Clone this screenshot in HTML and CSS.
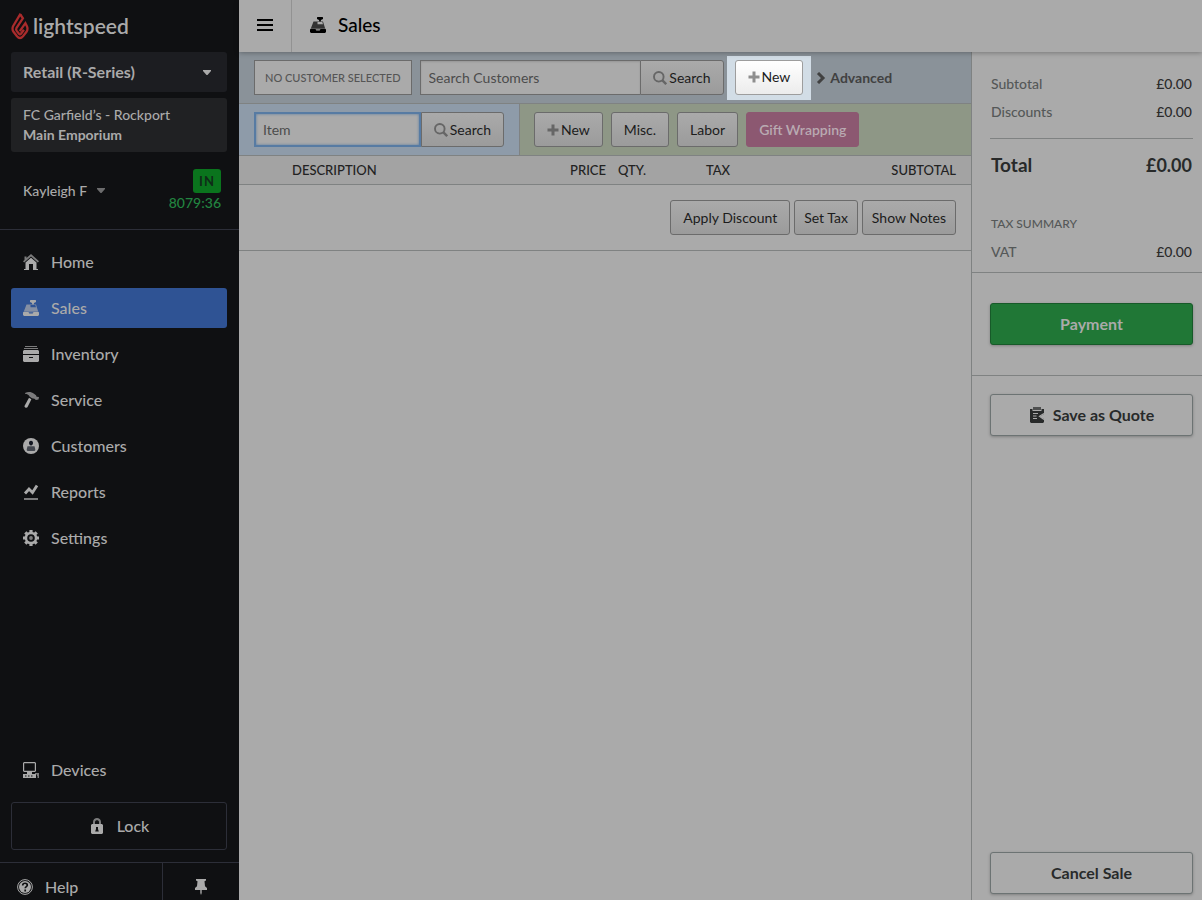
FILE: index.html
```html
<!DOCTYPE html>
<html lang="en">
<head>
<meta charset="utf-8">
<title>Sales</title>
<meta name="viewport" content="width=device-width, initial-scale=1">
<link rel="stylesheet" href="styles.css">
</head>
<body>
<svg class="sprite" aria-hidden="true">
  <symbol id="register" viewBox="0 0 16 16">
    <path d="M7.500 0h5l.5.500v1.500l-2 1-.3 1.500H9.300L9 3 7 2V.500z"/>
    <path class="soft" fill-rule="evenodd" d="M3.500 4.500H13L15 11H1zM7.500 5v2.200H13L12.300 5z"/>
    <path fill-rule="evenodd" d="M1 11.500h14l1 1v2.500l-1 1H1l-1-1v-2.500zM5.500 12.200l.8 1.200h3.400l.8-1.200z"/>
  </symbol>
  <symbol id="search" viewBox="0 0 14 14">
    <circle cx="5.800" cy="5.800" r="4.800" fill="none" stroke="currentColor" stroke-width="1.900"/>
    <path d="M9.200 9.200l4 4" stroke="currentColor" stroke-width="2.400"/>
  </symbol>
  <symbol id="plus" viewBox="0 0 12 12"><path d="M4.500.500h3v4h4v3h-4v4h-3v-4h-4v-3h4z"/></symbol>
</svg>
<div class="app">
  <aside class="sidebar">
    <a class="logo" href="#">
      <svg class="flame" viewBox="0 0 18 27" aria-hidden="true">
        <g fill="none" stroke="#a92b2c" stroke-width="2.300">
          <path d="M9.600.600L2.200 13Q.700 16 2.500 18.800L6 23.200Q9 26.800 12 23.200L15.500 18.800Q17.300 16 15.800 13L14.400 10.200 8.800 18.200"/>
          <path d="M9.300 1.500l2.600 3.800L5.400 15.200Q4.700 16.500 5.700 17.900L8 20.800Q9 21.900 10 20.800L12.900 16.800"/>
        </g>
      </svg>
      <span>lightspeed</span>
    </a>
    <button class="product" type="button">Retail (R-Series)
      <svg class="caret" viewBox="0 0 8 5" aria-hidden="true"><path d="M0 0h8v1L4.500 5h-1L0 1z"/></svg>
    </button>
    <div class="location"><span>FC Garfield’s - Rockport</span><strong>Main Emporium</strong></div>
    <div class="user">
      <button class="user-name" type="button">Kayleigh F
        <svg class="caret" viewBox="0 0 8 5" aria-hidden="true"><path d="M0 0h8v1L4.500 5h-1L0 1z"/></svg>
      </button>
      <div class="clock"><span class="badge">IN</span><span>8079:36</span></div>
    </div>
    <nav class="nav">
      <a href="#"><svg viewBox="0 0 16 16"><path class="soft" d="M8 0l8 7.300-1.200 1.200L8 2.600 1.200 8.500 0 7.300 1.500 6V2.500h2v1.600z"/><path d="M8 3.800l5.500 4.800V15H15v1h-5v-6H6v6H1v-1h1.500V8.600z"/></svg>Home</a>
      <a class="active" href="#" aria-current="page"><svg><use href="#register"/></svg>Sales</a>
      <a href="#"><svg viewBox="0 0 16 16"><path class="soft" d="M2 0h12v1H2zM1 2h14v1H1z"/><path fill-rule="evenodd" d="M1 4h14l1 1v3H0V5zM0 9h16v6l-1 1H1l-1-1zM6 11v1h4v-1z"/></svg>Inventory</a>
      <a href="#"><svg viewBox="0 0 16 16"><path class="soft" d="M2 1c3-1.500 6.500-1.200 9 .7l2 1.500.6 1.500 2.400.3-.5 2.500-2.600.5-1.500-1.300-2.400-.5-2.500-1.600C6 3 4.500 1.800 2 1.700z"/><path d="M6 5.800l2.400 1.400L4.600 15c-.9 1.500-3.600.500-3-1.300z"/></svg>Service</a>
      <a href="#"><svg viewBox="0 0 16 16"><circle cx="8" cy="8" r="8"/><path class="ink" d="M8 2.800c3 0 2.300 4.800 0 4.800S5 2.800 8 2.800z"/><path class="ink-soft" d="M4.500 8.200h7l.8 3.300c0 1.200-.8 1.500-1.600 1.500H5.300c-.8 0-1.600-.3-1.600-1.500z"/></svg>Customers</a>
      <a href="#"><svg viewBox="0 0 16 16"><path d="M2 9.500L6 5l3.500 3.500L14 1.500" fill="none" stroke="currentColor" stroke-width="2.800"/><path class="soft" d="M1 14h14v2H1z"/></svg>Reports</a>
      <a href="#"><svg viewBox="0 0 16 16"><path d="M8 0v16M0 8h16M2.300 2.300l11.400 11.400M13.700 2.300L2.300 13.700" stroke="currentColor" stroke-width="3.200"/><circle cx="8" cy="8" r="6.300"/><circle class="hole" cx="8" cy="8" r="3.800"/><circle class="soft" cx="8" cy="8" r="1.900"/></svg>Settings</a>
    </nav>
    <nav class="nav devices">
      <a href="#"><svg viewBox="0 0 16 16"><path fill-rule="evenodd" d="M1 0h11l1 1v8l-1 1H9v2h4v4H0v-4h4v-2H1L0 9V1zM1.200 1.200v7.600h10.600V1.200zM2 13.500v1h1.500v-1zm3 0v1h1.500v-1zm3 0v1h1.500v-1z"/><path class="soft" d="M12 11h4v5h-1.500v-2H14v-1.500h-2z"/></svg>Devices</a>
    </nav>
    <button class="lock" type="button"><svg viewBox="0 0 16 16"><path class="soft" d="M4 7V4c0-5.300 8-5.300 8 0v3h-2V4c0-2.500-4-2.500-4 0v3z"/><path fill-rule="evenodd" d="M3 6h10l1 1v8l-1 1H3l-1-1V7zM7 9v2l-.8 2.500h3.600L9 11V9z"/></svg>Lock</button>
    <div class="foot">
      <a class="help" href="#"><svg viewBox="0 0 16 16"><circle cx="8" cy="8" r="7.400" fill="none" stroke="currentColor"/><circle cx="8" cy="8" r="6"/><path d="M5.700 6.500c0-3 4.800-2.900 4.600-.3C10.200 7.600 8.200 7.600 8.200 9.300M8.200 10.500v2" fill="none" stroke="#0f1012" stroke-width="1.700"/></svg>Help</a>
      <button class="pin" type="button" aria-label="Pin menu"><svg viewBox="0 0 16 16"><path d="M3 0h10v1.500l-1.500.8.500 5 2 1.700v2H2V9l2-1.700.5-5L3 1.500z"/><path class="soft" d="M7 11h2v3l-1 2-1-2z"/></svg></button>
    </div>
  </aside>

  <div class="page">
    <header class="topbar">
      <button class="menu" type="button" aria-label="Toggle menu"><i></i><i></i><i></i></button>
      <h1><svg aria-hidden="true"><use href="#register"/></svg>Sales</h1>
    </header>
    <div class="columns">
      <main class="sale">
        <form class="bar customer">
          <div class="no-customer">NO CUSTOMER SELECTED</div>
          <div class="combo grow-a"><input type="text" aria-label="Search customers" placeholder="Search Customers"><button class="btn" type="button"><svg class="s"><use href="#search"/></svg>Search</button></div>
          <div class="spotlight"><button class="btn bright" type="button"><svg class="p"><use href="#plus"/></svg>New</button></div>
          <a class="advanced" href="#"><svg viewBox="0 0 10 12" aria-hidden="true"><path d="M2 1l5 5-5 5" fill="none" stroke="currentColor" stroke-width="3"/></svg>Advanced</a>
        </form>
        <div class="split">
          <form class="bar items">
            <div class="combo grow-b"><input class="focus" type="text" aria-label="Item" placeholder="Item"><button class="btn" type="button"><svg class="s"><use href="#search"/></svg>Search</button></div>
          </form>
          <div class="bar actions">
            <button class="btn" type="button"><svg class="p"><use href="#plus"/></svg>New</button>
            <button class="btn" type="button">Misc.</button>
            <button class="btn" type="button">Labor</button>
            <button class="btn gift" type="button">Gift Wrapping</button>
          </div>
        </div>
        <table class="lines">
          <thead><tr><th class="c-desc" scope="col">DESCRIPTION</th><th class="c-price" scope="col">PRICE</th><th class="c-qty" scope="col">QTY.</th><th class="c-tax" scope="col">TAX</th><th class="c-sub" scope="col">SUBTOTAL</th></tr></thead>
          <tbody><tr><td colspan="5"><div class="tools">
            <button class="btn" type="button">Apply Discount</button>
            <button class="btn slim" type="button">Set Tax</button>
            <button class="btn slim" type="button">Show Notes</button>
          </div></td></tr></tbody>
        </table>
      </main>
      <aside class="totals">
        <section class="summary">
          <dl><div><dt>Subtotal</dt><dd>£0.00</dd></div><div><dt>Discounts</dt><dd>£0.00</dd></div></dl>
          <dl class="total"><div><dt>Total</dt><dd>£0.00</dd></div></dl>
          <h2>TAX SUMMARY</h2>
          <dl><div><dt>VAT</dt><dd>£0.00</dd></div></dl>
        </section>
        <section class="pay"><button class="big green" type="button">Payment</button></section>
        <section class="rest">
          <button class="big" type="button"><svg viewBox="0 0 16 16" aria-hidden="true"><path class="soft" d="M4 0h8v3H4z"/><path d="M1 2h2.500v2h9V2H15v13l-1 1H2l-1-1z"/><path d="M4 6.500h5M4 9h3.500M4 11.500h4M15 6.500l-4.500 2.800L15 12.500" fill="none" stroke="#aaa" stroke-width="1.200"/><path fill="#aaa" d="M15 7v5l-4-2.500z"/></svg>Save as Quote</button>
          <button class="big" type="button">Cancel Sale</button>
        </section>
      </aside>
    </div>
  </div>
</div>
</body>
</html>
```
FILE: styles.css
```css
* { box-sizing: border-box; }
body { margin: 0; background: #aaa; color: #222; font: 14px/20px Lato, "Liberation Sans", sans-serif; }
button, input { font: inherit; color: inherit; margin: 0; }
button { background: none; border: 0; padding: 0; cursor: pointer; }
a { color: inherit; text-decoration: none; }
svg { fill: currentColor; flex: none; }
.soft { opacity: .7; }
.sprite { position: absolute; width: 0; height: 0; }

.app { display: grid; grid-template-columns: 239px minmax(0, 1fr); height: 100vh; }

/* Sidebar */
.sidebar { display: flex; flex-direction: column; min-height: 0; overflow: hidden; background: #0f1012; color: #aaa; font-weight: 500; }
.sidebar svg { width: 16px; height: 16px; }
.logo { display: flex; align-items: center; gap: 4px; height: 52px; padding-left: 11px; font-size: 21px; font-weight: 600; line-height: 28px; }
.sidebar .flame { width: 18px; height: 27px; }
.sidebar .caret { width: 8px; height: 5px; }
.product { display: flex; align-items: center; justify-content: space-between; height: 40px; margin: 0 12px 6px 11px; padding: 0 16px 0 12px; border-radius: 3px; background: #1c1d21; font-size: 16px; font-weight: 700; }
.location { display: flex; flex-direction: column; margin: 0 12px 0 11px; padding: 7px 12px; border-radius: 3px; background: #202123; }
.location strong { font-weight: 700; }
.user { display: flex; justify-content: space-between; align-items: center; height: 78px; padding: 0 18px 0 23px; border-bottom: 1px solid #2c2e38; }
.user-name { display: flex; align-items: center; gap: 10px; }
.user-name .caret { opacity: .6; }
.clock { display: flex; flex-direction: column; align-items: flex-end; color: #228540; }
.badge { width: 28px; height: 24px; border-radius: 3px; background: #0a741d; color: #0f2b18; font-size: 13px; font-weight: 700; line-height: 24px; text-align: center; letter-spacing: 1px; }
.nav { display: flex; flex-direction: column; gap: 6px; margin: 12px 12px 0 11px; font-size: 16px; }
.nav a { display: flex; align-items: center; gap: 12px; height: 40px; padding-left: 12px; border-radius: 3px; }
.nav .active { background: #2f5394; }
.ink { fill: #131722; }
.ink-soft { fill: #43474f; }
.hole { fill: #0f1012; }
.devices { margin-top: auto; }
.lock { display: flex; align-items: center; justify-content: center; gap: 12px; height: 48px; flex: none; margin: 12px 12px 12px 11px; border: 1px solid #2c2e38; border-radius: 3px; font-size: 16px; }
.foot { display: grid; grid-template-columns: 162px 1fr; border-top: 1px solid #2c2e38; font-size: 16px; line-height: 24px; }
.help { display: flex; align-items: center; gap: 12px; padding: 12px 0 1px 17px; }
.pin { display: flex; align-items: center; justify-content: center; padding-top: 11px; border-left: 1px solid #2c2e38; }

/* Top bar */
.page { display: flex; flex-direction: column; min-width: 0; }
.topbar { position: relative; display: flex; height: 52px; flex: none; background: #aaa; color: #000; box-shadow: 0 1px 5px rgba(0, 0, 0, .3); }
.menu { display: flex; flex-direction: column; justify-content: center; gap: 3px; width: 53px; padding: 0 0 2px 18px; border-right: 1px solid #929292; }
.menu i { width: 16px; height: 2px; background: #000; }
.topbar h1 { display: flex; align-items: center; gap: 12px; margin: 0 0 0 18px; padding-bottom: 2px; font-size: 19px; font-weight: 500; }
.topbar h1 svg { width: 16px; height: 16px; }
.columns { display: grid; grid-template-columns: minmax(0, 1fr) 231px; flex: 1; min-height: 0; }

/* Customer and item bars */
.bar { display: flex; align-items: center; height: 52px; padding: 0 15px; border-bottom: 1px solid #7f8282; }
.customer { background: #8a9299; }
.no-customer { height: 35px; padding: 0 10px; margin-right: 8px; border: 1px solid #6b6b6b; background: #aaa; color: #555; font-size: 11px; font-weight: 500; line-height: 33px; white-space: nowrap; }
.combo { display: flex; min-width: 0; }
.combo input { flex: 1; min-width: 0; height: 35px; padding: 0 8px; border: 1px solid #6b6b6b; border-right: 0; border-radius: 0; outline: 0; background: #aaa; box-shadow: inset 0 1px 2px rgba(0, 0, 0, .12); }
.combo input::placeholder { color: #4c4c4c; opacity: 1; }
.combo .btn { border-radius: 0 3px 3px 0; }
.grow-a { width: 304px; }
.grow-b { width: 250px; }
.combo .focus { border: 2px solid #577ba3; padding: 0 7px; box-shadow: inset 0 0 3px #577ba3; }
.btn { display: inline-flex; align-items: center; justify-content: center; gap: 2px; height: 35px; padding: 0 12px; border: 1px solid #6b6b6b; border-radius: 3px; background: linear-gradient(#aaa, #9b9b9b); color: #1c1c1c; white-space: nowrap; }
.btn svg { color: #666; }
.btn .s { width: 14px; height: 14px; }
.btn .p { width: 12px; height: 12px; }
.spotlight { margin-left: 3px; padding: 4px 8px 5px; background: #d2dde6; }
.bright { border-color: #9d9d9d; background: linear-gradient(#fff, #ececec); }
.bright svg { color: #8e8e8e; }
.advanced { display: flex; align-items: center; gap: 4px; margin-left: 5px; color: #414141; font-weight: 700; }
.advanced svg { width: 10px; height: 12px; }
.split { display: grid; grid-template-columns: 281px minmax(0, 1fr); }
.items { background: #8e9ba9; border-right: 1px solid #7f8282; }
.actions { gap: 8px; padding-left: 14px; background: #8e9786; }
.gift { border-color: #8c5871; background: #8c5871; color: #b9aab1; font-weight: 600; }

/* Sale lines */
.lines { width: 100%; border-collapse: separate; border-spacing: 0; table-layout: fixed; }
.lines th { height: 29px; padding: 0; border-bottom: 1px solid #7f8282; background: #a3a3a3; font-size: 13px; font-weight: 500; line-height: 28px; text-align: left; }
.lines .c-desc { padding-left: 53px; }
.lines .c-price { width: 60px; text-align: right; }
.lines .c-qty { width: 62px; padding-left: 12px; }
.lines .c-tax { width: 100px; text-align: center; }
.lines .c-sub { width: 203px; padding-right: 15px; text-align: right; }
.lines td { padding: 15px 15px; border-bottom: 1px solid #7f8282; }
.tools { display: flex; justify-content: flex-end; gap: 4px; }
.slim { padding: 0 9px; }

/* Totals */
.totals { display: flex; flex-direction: column; border-left: 1px solid #7f8282; }
.summary { height: 221px; padding: 18px 9px 0 18px; border-bottom: 1px solid #7f8282; }
dl, dd, h2 { margin: 0; }
dl div { display: flex; justify-content: space-between; padding: 0 1px; line-height: 28px; }
dt, h2 { color: #555858; }
dt { font-weight: 500; }
dd { color: #2b2b2b; font-weight: 500; }
.total { margin: 12px 0 33px; padding-top: 12px; border-top: 1px solid #7f8282; font-size: 19px; }
.total dt, .total dd { color: #282a2a; font-weight: 700; }
.total dd { font-size: 18px; }
h2 { margin-bottom: 2px; padding-left: 1px; font-size: 12px; font-weight: 500; line-height: 24px; }
.pay { padding: 30px 9px 30px 18px; border-bottom: 1px solid #7f8282; }
.rest { display: flex; flex: 1; flex-direction: column; justify-content: space-between; padding: 18px 9px 6px 18px; }
.big { display: flex; align-items: center; justify-content: center; gap: 8px; width: 100%; height: 42px; border: 1px solid #6c7373; border-radius: 3px; background: #aaa; color: #282a2a; font-size: 16px; font-weight: 700; box-shadow: 0 1px 3px rgba(0, 0, 0, .25); }
.big svg { width: 16px; height: 16px; }
.green { border-color: #175a29; background: #207736; color: #aaa; }
```
